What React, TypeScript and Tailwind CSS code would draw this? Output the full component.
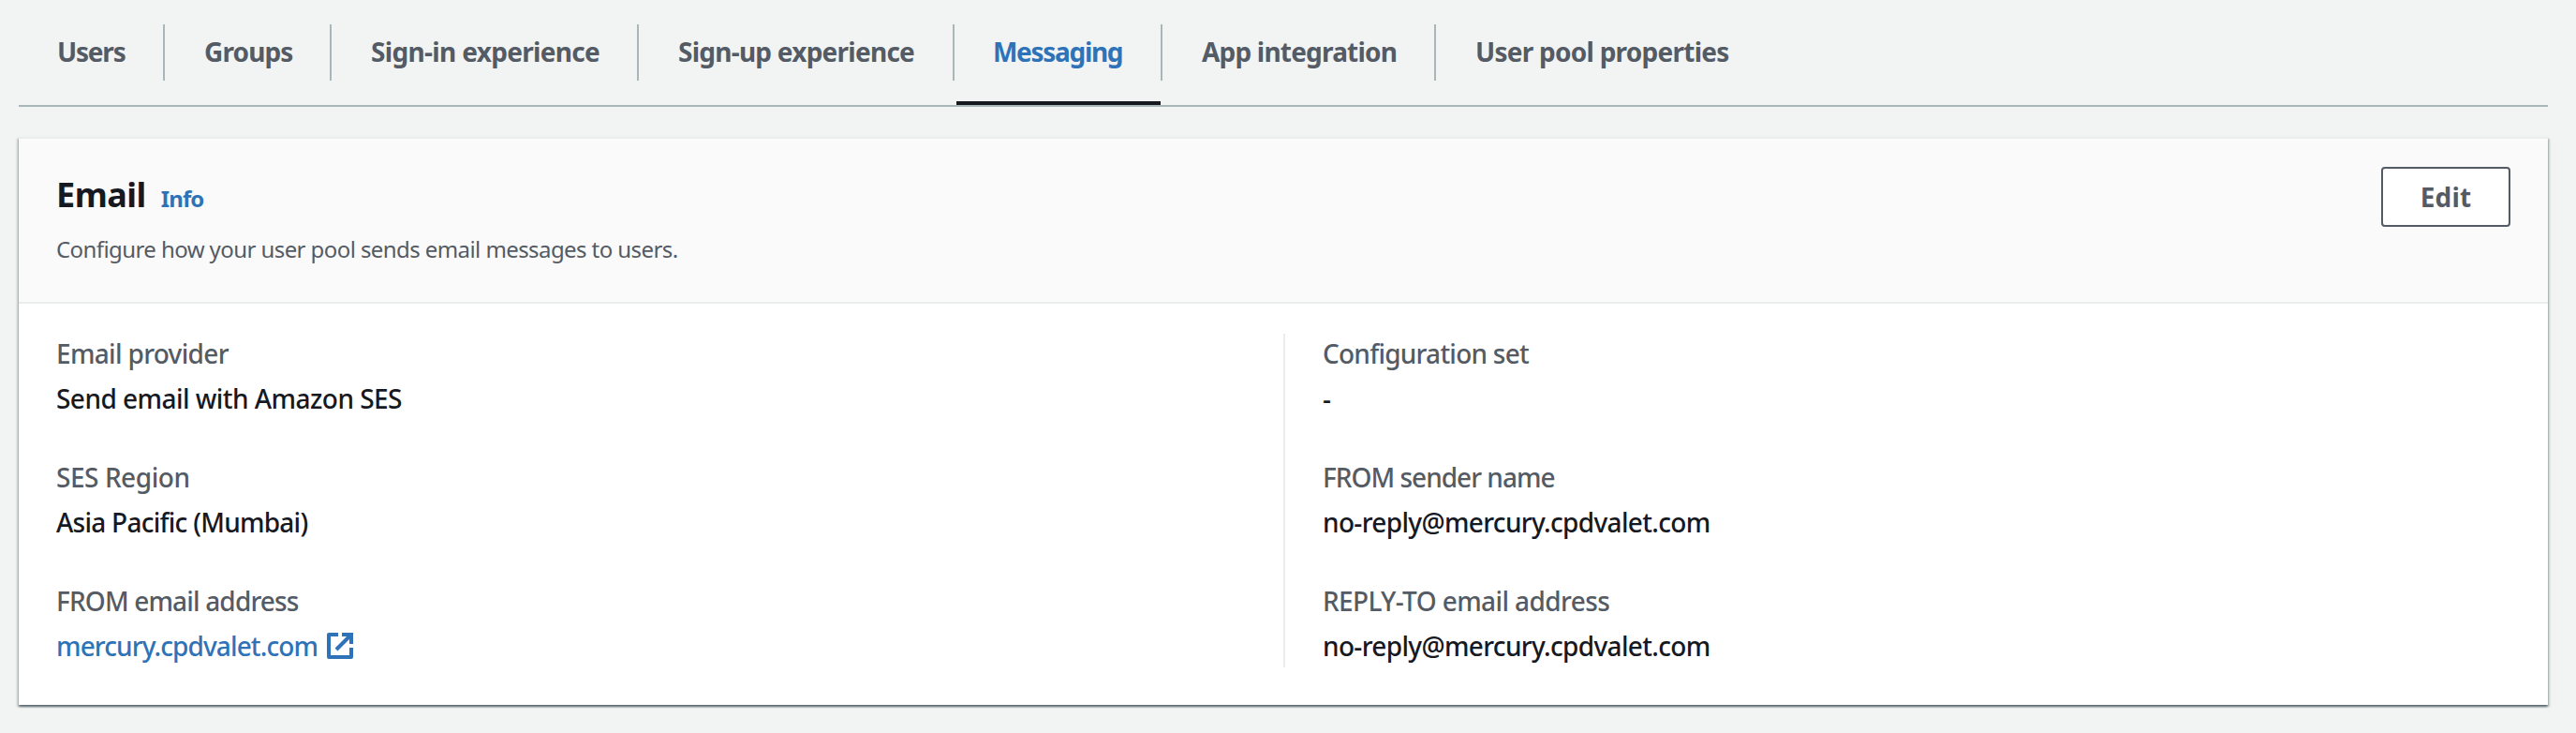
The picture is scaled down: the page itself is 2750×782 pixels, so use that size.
import type { ReactNode } from "react";

const tabs = [
  { label: "Users", cls: "w-[156px] pl-[41px] tracking-[-1.2px]" },
  { label: "Groups", cls: "w-[178px] pl-[42px] tracking-[-0.85px]" },
  { label: "Sign-in experience", cls: "w-[328px] pl-[42px] tracking-[-0.67px]" },
  { label: "Sign-up experience", cls: "w-[337px] pl-[42px] tracking-[-0.75px]" },
  { label: "Messaging", cls: "w-[222px] pl-[41px] tracking-[-1.3px]", active: true },
  { label: "App integration", cls: "w-[292px] pl-[42px] tracking-[-0.8px]" },
  { label: "User pool properties", cls: "w-[360px] pl-[42px] tracking-[-0.74px]" },
];

function Tabs() {
  return (
    <nav className="flex h-[114px] border-b-2 border-[#aab7b8]">
      {tabs.map((t, i) => (
        <div key={t.label} className="relative h-28 pt-[26px]">
          <div
            className={`flex h-[60px] items-center whitespace-nowrap pb-[2px] text-[28px] font-bold leading-[44px] ${t.cls} ${
              i < tabs.length - 1 ? "border-r-2 border-[#aab7b8]" : ""
            } ${t.active ? "text-[#2e73b8]" : "text-[#545b64]"}`}
          >
            {t.label}
          </div>
          {t.active && <span className="absolute bottom-0 left-[2px] right-[2px] h-1 bg-[#16191f]" />}
        </div>
      ))}
    </nav>
  );
}

function Field({ label, labelCls, children }: { label: string; labelCls: string; children: ReactNode }) {
  return (
    <div className="flex flex-col gap-1 whitespace-nowrap text-[28px] font-medium leading-[44px]">
      <div className={`text-[#545b64] ${labelCls}`}>{label}</div>
      <div className="text-[#16191f]">{children}</div>
    </div>
  );
}

function ExternalIcon() {
  return (
    <svg width="28" height="28" viewBox="0 0 28 28" fill="none" stroke="currentColor" strokeWidth="4" className="ml-[10px]">
      <path d="M12 2H2v24h24V16" strokeLinejoin="round" />
      <path d="M16 2h10v10" />
      <path d="M25 3L10 18" />
    </svg>
  );
}

export default function App() {
  return (
    <div className="h-[782px] w-[2750px] overflow-hidden bg-[#f2f3f3] pl-5 pr-[30px] font-['Noto_Sans',sans-serif]">
      <Tabs />
      <section className="mt-8 h-[606px] border-t-2 border-[#eaeded] bg-white shadow-[0_2px_2px_0_rgba(0,28,36,0.5),2px_2px_2px_0_rgba(0,28,36,0.15),-2px_2px_2px_0_rgba(0,28,36,0.15)]">
        <header className="flex h-44 justify-between border-b-2 border-[#eaeded] bg-[#fafafa] px-10 pt-[30px]">
          <div className="whitespace-nowrap pt-[7px]">
            <div className="flex items-baseline leading-[46px]">
              <h2 className="text-[36px] font-bold tracking-[-0.5px] text-[#16191f]">Email</h2>
              <a className="ml-4 text-[24px] font-bold tracking-[-0.9px] text-[#2e73b8]">Info</a>
            </div>
            <p className="mt-[13px] text-[24px] leading-9 tracking-[-0.58px] text-[#545b64]">
              Configure how your user pool sends email messages to users.
            </p>
          </div>
          <button className="flex h-16 w-[138px] items-center justify-center rounded-[4px] border-2 border-[#545b64] bg-white text-[28px] font-bold leading-[44px] tracking-[0.2px] text-[#545b64]">
            Edit
          </button>
        </header>
        <div className="grid grid-cols-[1350px_1350px] pt-8">
          <div className="-mt-px flex flex-col gap-10 pl-10">
            <Field label="Email provider" labelCls="tracking-[-0.68px]">
              <span className="tracking-[-0.54px]">Send email with Amazon SES</span>
            </Field>
            <Field label="SES Region" labelCls="tracking-[-0.45px]">
              <span className="tracking-[-0.74px]">Asia Pacific (Mumbai)</span>
            </Field>
            <Field label="FROM email address" labelCls="tracking-[-0.84px]">
              <a className="flex items-center tracking-[-0.89px] text-[#2e73b8]">
                mercury.cpdvalet.com
                <ExternalIcon />
              </a>
            </Field>
          </div>
          <div className="h-[356px] border-l-2 border-[#eaeded] pl-10">
            <div className="-mt-px flex flex-col gap-10">
              <Field label="Configuration set" labelCls="tracking-[-0.76px]">
                <span>-</span>
              </Field>
              <Field label="FROM sender name" labelCls="tracking-[-0.99px]">
                <span className="tracking-[-0.66px]">no-reply@mercury.cpdvalet.com</span>
              </Field>
              <Field label="REPLY-TO email address" labelCls="tracking-[-0.6px]">
                <span className="tracking-[-0.66px]">no-reply@mercury.cpdvalet.com</span>
              </Field>
            </div>
          </div>
        </div>
      </section>
    </div>
  );
}
